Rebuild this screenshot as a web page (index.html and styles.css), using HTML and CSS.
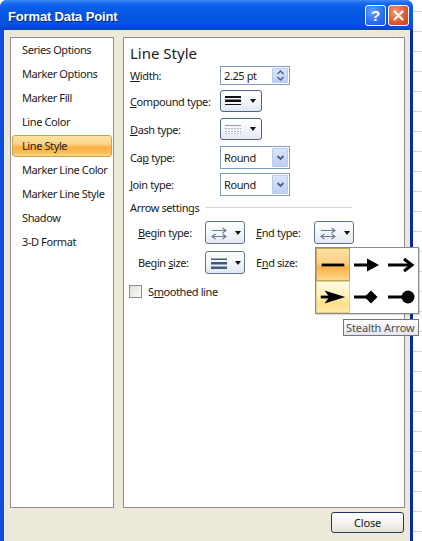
FILE: index.html
```html
<!DOCTYPE html>
<html>
<head>
<meta charset="utf-8">
<link rel="stylesheet" href="styles.css">
</head>
<body>
<div class="screen">
  <div class="window">
    <div class="titlebar">
      <span class="title">Format Data Point</span>
      <span class="tb-btn tb-help">?</span>
      <span class="tb-btn tb-close"><svg width="13" height="13" viewBox="0 0 13 13"><path d="M2.5 2.5 L10.5 10.5 M10.5 2.5 L2.5 10.5" stroke="#fff" stroke-width="2.2" stroke-linecap="round"/></svg></span>
    </div>
    <div class="frame">
      <div class="panels">
        <ul class="nav">
          <li>Series Options</li>
          <li>Marker Options</li>
          <li>Marker Fill</li>
          <li>Line Color</li>
          <li class="active">Line Style</li>
          <li>Marker Line Color</li>
          <li>Marker Line Style</li>
          <li>Shadow</li>
          <li>3-D Format</li>
        </ul>
        <div class="content">
          <h1 class="heading">Line Style</h1>
          <div class="props">
            <span class="lbl"><u>W</u>idth:</span>
            <div class="field spin">
              <span class="field-val">2.25 pt</span>
              <span class="field-btn spin-btn"><svg width="9" height="13" viewBox="0 0 9 13"><path d="M1.5 5 L4.5 2 L7.5 5 M1.5 8 L4.5 11 L7.5 8" fill="none" stroke="#4d6185" stroke-width="1.5"/></svg></span>
            </div>
            <span class="lbl"><u>C</u>ompound type:</span>
            <div class="dd">
              <svg width="16" height="16" viewBox="0 0 16 16"><rect x="0" y="3" width="16" height="2" fill="#111"/><rect x="0" y="6.5" width="16" height="2.5" fill="#111"/><rect x="0" y="11" width="16" height="1" fill="#111"/></svg>
              <span class="tri"></span>
            </div>
            <span class="lbl"><u>D</u>ash type:</span>
            <div class="dd">
              <svg width="16" height="16" viewBox="0 0 16 16" fill="#8d9ab0"><rect x="0" y="4" width="16" height="1"/><rect x="0" y="7" width="16" height="1" fill="#a7b3c6"/><rect x="0" y="10" width="16" height="1" fill="#a7b3c6"/><rect x="0" y="12" width="16" height="1" fill="#b8c2d2"/><g fill="#fff"><rect x="2" y="7" width="1" height="6"/><rect x="5" y="7" width="1" height="6"/><rect x="8" y="7" width="1" height="6"/><rect x="11" y="7" width="1" height="6"/><rect x="14" y="7" width="1" height="6"/></g></svg>
              <span class="tri"></span>
            </div>
            <span class="lbl">Ca<u>p</u> type:</span>
            <div class="field sel">
              <span class="field-val">Round</span>
              <span class="field-btn"><svg width="9" height="7" viewBox="0 0 9 7"><path d="M1.5 2 L4.5 5 L7.5 2" fill="none" stroke="#4d6185" stroke-width="1.8"/></svg></span>
            </div>
            <span class="lbl"><u>J</u>oin type:</span>
            <div class="field sel">
              <span class="field-val">Round</span>
              <span class="field-btn"><svg width="9" height="7" viewBox="0 0 9 7"><path d="M1.5 2 L4.5 5 L7.5 2" fill="none" stroke="#4d6185" stroke-width="1.8"/></svg></span>
            </div>
          </div>
          <div class="section"><span>Arrow settings</span><span class="rule"></span></div>
          <div class="arrows">
            <span class="lbl"><u>B</u>egin type:</span>
            <div class="dd dd-arrow">
              <svg width="16" height="16" viewBox="0 0 16 16" fill="none" stroke="#6b7d98" stroke-width="1.2"><path d="M1 5.5 H15 M11.5 3 L15 5.5 L11.5 8"/><path d="M1 11.5 H15 M4.5 9 L1 11.5 L4.5 14 M11.5 9 L15 11.5 L11.5 14"/></svg>
              <span class="tri"></span>
            </div>
            <span class="lbl"><u>E</u>nd type:</span>
            <div class="dd dd-arrow">
              <svg width="16" height="16" viewBox="0 0 16 16" fill="none" stroke="#6b7d98" stroke-width="1.2"><path d="M1 5.5 H15 M11.5 3 L15 5.5 L11.5 8"/><path d="M1 11.5 H15 M4.5 9 L1 11.5 L4.5 14 M11.5 9 L15 11.5 L11.5 14"/></svg>
              <span class="tri"></span>
            </div>
            <span class="lbl">Begin <u>s</u>ize:</span>
            <div class="dd dd-arrow">
              <svg width="16" height="16" viewBox="0 0 16 16" fill="#3f5a7f"><rect x="0" y="3.5" width="16" height="1.5"/><rect x="0" y="7" width="16" height="2.5"/><rect x="0" y="11.5" width="16" height="2.5"/></svg>
              <span class="tri"></span>
            </div>
            <span class="lbl">E<u>n</u>d size:</span>
            <span></span>
          </div>
          <div class="check-row"><span class="checkbox"></span><span>S<u>m</u>oothed line</span></div>
        </div>
      </div>
      <div class="footer"><button class="btn">Close</button></div>
    </div>
  </div>
  <div class="sheet"></div>

  <div class="gallery">
    <div class="cell cell-current"><svg width="34" height="32" viewBox="0 0 34 32"><path d="M5 16 H29" stroke="#000" stroke-width="3"/></svg></div>
    <div class="cell"><svg width="34" height="32" viewBox="0 0 34 32"><path d="M4 16 H19" stroke="#000" stroke-width="3"/><path d="M17 9.5 L29 16 L17 22.5 Z" fill="#000"/></svg></div>
    <div class="cell"><svg width="34" height="32" viewBox="0 0 34 32"><path d="M4 16 H27" stroke="#000" stroke-width="3"/><path d="M20 10 L28 16 L20 22" fill="none" stroke="#000" stroke-width="3"/></svg></div>
    <div class="cell cell-hover"><svg width="34" height="32" viewBox="0 0 34 32"><path d="M4 16 H20" stroke="#000" stroke-width="3"/><path d="M8 9 L30 16 L8 23 L13 16 Z" fill="#000"/></svg></div>
    <div class="cell"><svg width="34" height="32" viewBox="0 0 34 32"><path d="M4 16 H26" stroke="#000" stroke-width="3"/><path d="M21 9.5 L27.5 16 L21 22.5 L14.5 16 Z" fill="#000"/></svg></div>
    <div class="cell"><svg width="34" height="32" viewBox="0 0 34 32"><path d="M4 16 H22" stroke="#000" stroke-width="3"/><circle cx="24" cy="16" r="6.5" fill="#000"/></svg></div>
  </div>
  <div class="tooltip">Stealth Arrow</div>
</div>
</body>
</html>
```

FILE: styles.css
```css
* { box-sizing: border-box; }
html, body { margin: 0; padding: 0; }
body {
  width: 422px;
  height: 541px;
  overflow: hidden;
  font-family: "Noto Sans", "Open Sans", sans-serif;
  font-size: 11px;
  letter-spacing: -0.4px;
  color: #1b1b1b;
  background: #fff;
}
.screen {
  position: relative;
  display: flex;
  height: 541px;
}
.window {
  width: 413px;
  flex: none;
  display: flex;
  flex-direction: column;
  border-radius: 7px 7px 0 0;
  overflow: hidden;
  background: #0a45d8;
}
.titlebar {
  height: 30px;
  flex: none;
  display: flex;
  align-items: center;
  gap: 2px;
  padding: 0 4px 0 8px;
  background: linear-gradient(#3d8df6 0, #1a6cf0 3px, #0a5de8 7px, #0556e2 16px, #0553df 24px, #0448d2 28px, #0340c6 30px);
}
.title {
  flex: 1;
  padding-top: 2px;
  color: #fff;
  font-family: "Liberation Sans", Arial, sans-serif;
  font-weight: bold;
  font-size: 13px;
  letter-spacing: -0.15px;
  text-shadow: 1px 1px 0 #0a1f8a;
}
.tb-btn {
  width: 21px;
  height: 21px;
  border: 1px solid #fff;
  border-radius: 3px;
  display: flex;
  align-items: center;
  justify-content: center;
  color: #fff;
  font-family: "Liberation Sans", Arial, sans-serif;
  font-weight: bold;
  font-size: 15px;
  letter-spacing: 0;
}
.tb-help {
  background: radial-gradient(circle at 35% 30%, #6aa2ff 0, #2e6ff2 55%, #1a55dc 100%);
}
.tb-close {
  background: radial-gradient(circle at 35% 30%, #f29a7c 0, #e15a2f 55%, #c8401a 100%);
}
.frame {
  flex: 1;
  display: flex;
  flex-direction: column;
  background: #ece9d8;
  border-left: 4px solid #1150dc;
  border-right: 3px solid #0a2aa8;
  padding: 7px 5px 0 6px;
}
.panels {
  height: 471px;
  flex: none;
  display: flex;
  gap: 9px;
}
.nav {
  width: 104px;
  flex: none;
  margin: 0;
  padding: 0 1px;
  list-style: none;
  background: #fff;
  border: 1px solid #8c8f94;
}
.nav li {
  height: 22px;
  line-height: 20px;
  margin: 2px 0;
  padding-left: 9px;
  border: 1px solid transparent;
  border-radius: 3px;
  white-space: nowrap;
}
.nav li:first-child { margin-top: 1px; }
.nav li.active {
  border-color: #c9a350;
  background: linear-gradient(#fde4a2 0%, #fcd387 40%, #f9b13f 58%, #fac05b 85%, #fdd886 100%);
}
.content {
  flex: 1;
  background: #fff;
  border: 1px solid #8c8f94;
  padding: 3px 6px 0 6px;
}
.heading {
  margin: 0;
  height: 23px;
  font-size: 15px;
  font-weight: normal;
  line-height: 24px;
  letter-spacing: 0;
}
.props {
  display: grid;
  grid-template-columns: 90px auto;
  grid-template-rows: 23px 28px 28px 28px 27px;
  align-items: center;
  justify-items: start;
}
.lbl { white-space: nowrap; }
u { text-decoration-thickness: 1px; text-underline-offset: 1px; }
.field {
  width: 70px;
  display: flex;
  align-items: stretch;
  border: 1px solid #7f9db9;
  background: #fff;
  padding: 1px;
}
.spin { height: 19px; }
.sel { height: 23px; }
.field-val {
  flex: 1;
  padding-left: 2px;
  display: flex;
  align-items: center;
}
.field-btn {
  width: 16px;
  display: flex;
  align-items: center;
  justify-content: center;
  border: 1px solid #b9c9ef;
  border-radius: 1px;
  background: linear-gradient(#dbe5fb, #bccff6);
}
.dd {
  width: 42px;
  height: 22px;
  display: flex;
  align-items: center;
  gap: 9px;
  padding-left: 4px;
  border: 1px solid #4e6282;
  border-radius: 3px;
  background: linear-gradient(#ffffff, #f1f4f9 60%, #e2e8f1);
}
.dd-arrow { width: 40px; height: 23px; padding-left: 5px; gap: 8px; border-color: #5d7393; }
.tri {
  width: 0;
  height: 0;
  border-left: 3.5px solid transparent;
  border-right: 3.5px solid transparent;
  border-top: 4px solid #111;
}
.section {
  height: 18px;
  display: flex;
  align-items: center;
  gap: 6px;
  padding-right: 46px;
}
.rule {
  flex: 1;
  height: 1px;
  background: #d8d6cb;
}
.arrows {
  margin-top: 5px;
  padding-left: 8px;
  display: grid;
  grid-template-columns: 67px 51px 58px 41px;
  grid-template-rows: 23px 23px;
  row-gap: 7px;
  align-items: center;
}
.check-row {
  margin-top: 9px;
  height: 16px;
  display: flex;
  align-items: center;
  gap: 6px;
  margin-left: -1px;
}
.checkbox {
  width: 13px;
  height: 13px;
  border: 1px solid #8a8d91;
  background: linear-gradient(135deg, #e0e0d9, #fbfbf9);
}
.footer {
  display: flex;
  justify-content: flex-end;
  padding-top: 4px;
  padding-right: 1px;
}
.btn {
  width: 73px;
  height: 21px;
  font-family: inherit;
  font-size: 11px;
  letter-spacing: -0.2px;
  color: #111;
  border: 1px solid #1f3a5f;
  border-radius: 3px;
  background: linear-gradient(#ffffff, #f5f4ef 50%, #e3e1d6);
  padding: 0;
}
.sheet {
  flex: 1;
  background-color: #fff;
  background-image: repeating-linear-gradient(to bottom, transparent 0, transparent 11px, #d3d7de 11px, #d3d7de 12px, transparent 12px, transparent 20px);
}
.gallery {
  position: absolute;
  left: 315px;
  top: 247px;
  width: 104px;
  height: 67px;
  border: 1px solid #8b8b8b;
  background: #fff;
  display: grid;
  grid-template-columns: 34px 34px 34px;
  grid-template-rows: 33px 32px;
  box-shadow: 1px 1px 1px rgba(0,0,0,0.15);
}
.cell {
  display: flex;
  align-items: center;
  justify-content: center;
}
.cell-current {
  border: 1px solid #c2a460;
  background: linear-gradient(#fde1a4 0%, #fccf85 45%, #f9b44c 60%, #fbc970 85%, #fdda92 100%);
}
.cell-hover {
  border: 1px solid #e3cf8a;
  background: linear-gradient(#fffbe4 0%, #fff1bb 45%, #ffe08a 70%, #ffe9a6 100%);
}
.tooltip {
  position: absolute;
  left: 343px;
  top: 319px;
  width: 76px;
  height: 17px;
  border: 1px solid #767676;
  background: linear-gradient(#ffffff, #e4e5f0);
  color: #4c4c4c;
  font-size: 11px;
  letter-spacing: -0.1px;
  line-height: 15px;
  padding-left: 2px;
  white-space: nowrap;
}
```
